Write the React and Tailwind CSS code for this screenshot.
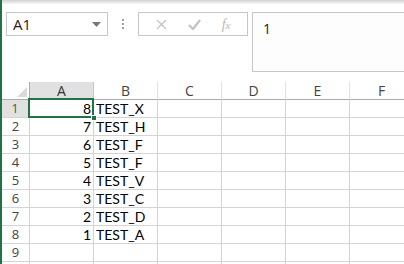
import React from 'react';

const GREEN = '#217346';
const cols = ['A', 'B', 'C', 'D', 'E', 'F'];
const rows = [
  [8, 'TEST_X'],
  [7, 'TEST_H'],
  [6, 'TEST_F'],
  [5, 'TEST_F'],
  [4, 'TEST_V'],
  [3, 'TEST_C'],
  [2, 'TEST_D'],
  [1, 'TEST_A'],
  [null, ''],
  [null, ''],
];

function FormulaBar() {
  return (
    <div className="shrink-0 flex items-start h-[78px] pl-[4px] pt-[8px] bg-white">
      {/* name box */}
      <div className="w-[102px] h-[24px] border border-[#c6c6c6] bg-white flex items-center pl-[6px] pr-[6px]">
        <span className="flex-1 text-[15px] text-[#222]" style={{ fontFamily: '"Open Sans", sans-serif' }}>A1</span>
        <svg width="9" height="5" viewBox="0 0 9 5">
          <path d="M0 0h9L4.5 5z" fill="#777" />
        </svg>
      </div>
      {/* grip dots */}
      <div className="w-[30px] h-[24px] flex flex-col items-center justify-center gap-[2px]">
        <span className="w-[2px] h-[2px] bg-[#a0a0a0]" />
        <span className="w-[2px] h-[2px] bg-[#a0a0a0]" />
        <span className="w-[2px] h-[2px] bg-[#a0a0a0]" />
      </div>
      {/* cancel / enter / fx */}
      <div className="w-[110px] h-[24px] border border-[#c6c6c6] bg-white flex items-center justify-around px-[6px]">
        <svg width="11" height="11" viewBox="0 0 11 11">
          <path d="M1 1l9 9M10 1l-9 9" stroke="#c4c4c4" strokeWidth="1.4" />
        </svg>
        <svg width="13" height="11" viewBox="0 0 13 11">
          <path d="M1 6l4 4 7-9" stroke="#c4c4c4" strokeWidth="2.4" fill="none" />
        </svg>
        <span className="text-[14px] italic text-[#b8b8b8]" style={{ fontFamily: '"Liberation Serif", serif' }}>
          f<span className="text-[11px]">x</span>
        </span>
      </div>
      {/* formula input */}
      <div className="ml-[4px] flex-1 h-[60px] border border-r-0 border-[#c6c6c6] bg-[#fdfdfd] pl-[10px] pt-[3px] -mr-[4px]">
        <span className="text-[14px] text-[#222]" style={{ fontFamily: '"Open Sans", sans-serif' }}>1</span>
      </div>
    </div>
  );
}

function Sheet() {
  const cell = 'h-[18px] border-r border-b border-[#d4d4d4] bg-white';
  return (
    <div
      className="shrink-0 grid grid-cols-[28px_64px_64px_64px_64px_64px_64px] auto-rows-[18px]"
      style={{ fontFamily: 'Lato, "Liberation Sans", sans-serif' }}
    >
      {/* header row */}
      <div className="h-[18px] border-r border-b border-[#ababab] bg-white relative">
        <svg className="absolute right-[2px] bottom-[2px]" width="10" height="10" viewBox="0 0 10 10">
          <path d="M10 0v10H0z" fill="#dadada" />
        </svg>
      </div>
      {cols.map((c) =>
        c === 'A' ? (
          <div
            key={c}
            className="h-[18px] bg-[#e1e1e1] border-r border-[#c6c6c6] border-b-2 border-b-[#217346] flex items-center justify-center text-[14px] text-[#333]"
            style={{ fontFamily: '"Open Sans", sans-serif' }}
          >
            {c}
          </div>
        ) : (
          <div
            key={c}
            className="h-[18px] bg-white border-r border-[#e1e1e1] border-b border-b-[#ababab] flex items-center justify-center text-[14px] text-[#444]"
            style={{ fontFamily: '"Open Sans", sans-serif' }}
          >
            {c}
          </div>
        )
      )}
      {rows.map(([n, t], i) => (
        <React.Fragment key={i}>
          <div
            className={
              i === 0
                ? 'h-[18px] bg-[#e1e1e1] border-r-2 border-r-[#217346] border-b border-[#d4d4d4] flex items-center justify-center text-[13px] text-[#217346]'
                : 'h-[18px] bg-white border-r border-b border-[#d4d4d4] flex items-center justify-center text-[13px] text-[#444]'
            }
            style={{ fontFamily: '"Open Sans", sans-serif' }}
          >
            {i < 9 ? i + 1 : ''}
          </div>
          <div className={`${cell} relative flex items-end justify-end pr-[2px] text-[14px] leading-[17px] text-black`}>
            {n}
            {i === 0 && (
              <>
                <div className="absolute -left-[2px] -top-[2px] -right-[1px] -bottom-[1px] border-2 border-[#217346]" />
                <div className="absolute -right-[4px] -bottom-[4px] w-[6px] h-[6px] bg-[#217346] border border-white z-10" />
              </>
            )}
          </div>
          <div className={`${cell} flex items-end pl-[2px] text-[14px] leading-[17px] text-black whitespace-nowrap`}>{t}</div>
          <div className={cell} />
          <div className={cell} />
          <div className={cell} />
          <div className={cell} />
        </React.Fragment>
      ))}
    </div>
  );
}

export default function App() {
  return (
    <div className="w-[404px] h-[264px] overflow-hidden flex bg-white">
      <div className="w-[2px] shrink-0" style={{ background: GREEN }} />
      <div className="flex-1 flex flex-col overflow-hidden">
        <div className="shrink-0 h-[4px] bg-gradient-to-b from-[#d2d2d2] to-[#f7f7f7]" />
        <FormulaBar />
        <Sheet />
      </div>
    </div>
  );
}
